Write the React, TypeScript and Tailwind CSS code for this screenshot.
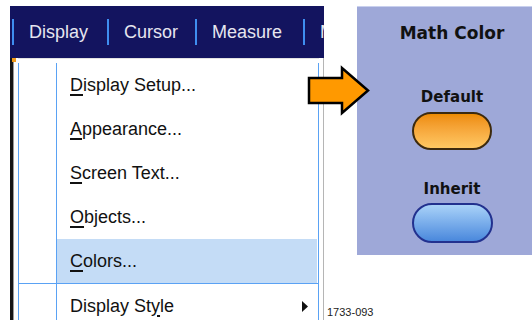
import React from "react";

function Sep() {
  return <div className="h-[26px] w-[2px] shrink-0 bg-[#3f8ef0]" />;
}

const BLUE = "border-[#5aa2f4]";

export default function App() {
  const items: { u: string; rest: string; active?: boolean }[] = [
    { u: "D", rest: "isplay Setup..." },
    { u: "A", rest: "ppearance..." },
    { u: "S", rest: "creen Text..." },
    { u: "O", rest: "bjects..." },
    { u: "C", rest: "olors...", active: true },
  ];
  return (
    <div className="relative flex h-[320px] w-[532px] overflow-hidden bg-white font-['Liberation_Sans',Arial,sans-serif] text-[#111]">
      <div className="w-[10px] shrink-0" />
      <div className="flex w-[314px] shrink-0 flex-col">
        <nav className="mt-[6px] flex h-[52px] shrink-0 items-center overflow-hidden whitespace-nowrap bg-[#13145f] pl-[2px] text-[18px] text-[#e6e6f0]">
          <Sep />
          <div className="w-[93px] shrink-0 pl-[15px]">Display</div>
          <Sep />
          <div className="w-[86px] shrink-0 pl-[15px]">Cursor</div>
          <Sep />
          <div className="w-[106px] shrink-0 pl-[15px]">Measure</div>
          <Sep />
          <div className="shrink-0 pl-[15px]">Math</div>
        </nav>
        <div className="flex flex-1">
          <div className="w-[3px] bg-[#161616]" />
          <div className="w-px bg-[#9a9a9a]" />
          <div className="w-[4px]" />
          <div className="flex w-[301px] flex-col">
            <div className="h-[5px] border-t border-[#e2e2e2]" />
            <div className={`flex-1 border-x ${BLUE} text-[18px]`}>
              {items.map((it) => (
                <div key={it.u} className="flex h-[44px]">
                  <div className={`w-[38px] border-r ${BLUE}`} />
                  <div
                    className={`flex flex-1 items-center pl-[13px] ${
                      it.active ? "mr-[1px] bg-[#c4dcf6]" : ""
                    }`}
                  >
                    <span className="underline decoration-[1.5px] underline-offset-[3px]">{it.u}</span>
                    <span>{it.rest}</span>
                  </div>
                </div>
              ))}
              <div className="h-px bg-[#5aa2f4]" />
              <div className="flex h-[44px]">
                <div className={`w-[38px] border-r ${BLUE}`} />
                <div className="flex flex-1 items-center justify-between pl-[13px] pr-[10px]">
                  <span>
                    Display St
                    <span className="underline decoration-[1.5px] underline-offset-[3px]">y</span>
                    le
                  </span>
                  <svg width="6" height="11" viewBox="0 0 6 11">
                    <polygon points="0,0 6,5.5 0,11" fill="#111" />
                  </svg>
                </div>
              </div>
            </div>
          </div>
          <div className="w-[4px]" />
          <div className="w-px bg-[#b5b5b5]" />
        </div>
      </div>

      <div className="flex w-[208px] shrink-0 flex-col pt-[6px]">
        <div className="ml-[33px] flex h-[249px] w-[175px] shrink-0 flex-col items-center border-t border-[#c9d0ee] bg-[#9ea8d8] pl-[15px] font-['DejaVu_Sans',sans-serif] font-bold text-[#111]">
          <div className="mt-[16px] text-[17px] leading-[20px]">Math Color</div>
          <div className="mt-[45px] text-[15px] leading-[18px]">Default</div>
          <div className="mt-[6px] h-[38px] w-[80px] rounded-full border-2 border-[#3d2a0e] bg-linear-to-b from-[#ee8c00] to-[#ffc862]" />
          <div className="mt-[30px] text-[15px] leading-[18px]">Inherit</div>
          <div className="mt-[5px] h-[40px] w-[81px] rounded-full border-2 border-[#22318f] bg-linear-to-b from-[#a9d2f8] to-[#4a88dc]" />
        </div>
        <div className="mt-[51px] pl-[3px] text-[11px] leading-[13px] text-[#222]">1733-093</div>
      </div>

      <div className="absolute left-[12px] top-[58px] h-[4px] w-[4px] bg-[#f29a1a]" />
      <svg className="absolute left-[306px] top-[65px]" width="66" height="52" viewBox="0 0 66 52">
        <polygon
          points="3,13 36,13 36,3 62,25.5 36,48 36,38 3,38"
          fill="#ff9900"
          stroke="#000"
          strokeWidth="2.5"
          strokeLinejoin="miter"
        />
      </svg>
    </div>
  );
}
